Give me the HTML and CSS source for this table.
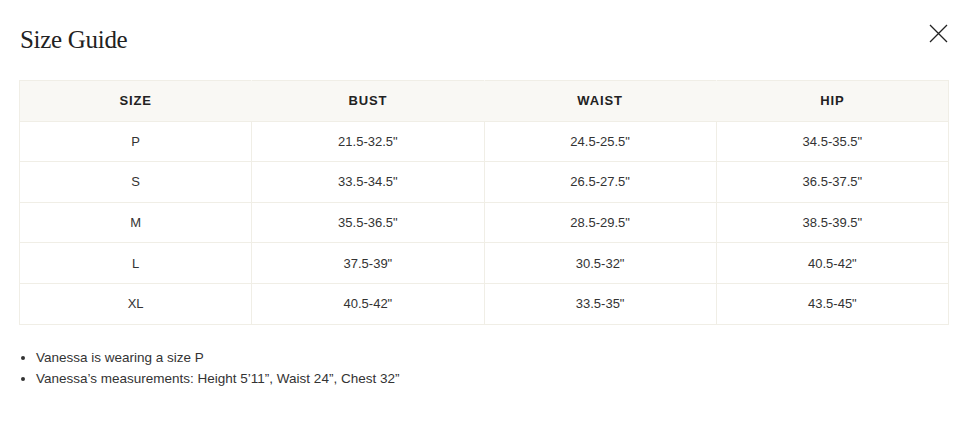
FILE: index.html
```html
<!DOCTYPE html>
<html>
<head>
<meta charset="utf-8">
<link rel="stylesheet" href="styles.css">
</head>
<body>
<div class="modal">
  <div class="head">
    <h1 class="title">Size Guide</h1>
    <button class="close" aria-label="Close">
      <svg width="19" height="19" viewBox="0 0 19 19"><path d="M1 1L18 18M18 1L1 18" stroke="#222" stroke-width="1.3" fill="none"/></svg>
    </button>
  </div>
  <table class="sizes">
    <thead>
      <tr><th>SIZE</th><th>BUST</th><th>WAIST</th><th>HIP</th></tr>
    </thead>
    <tbody>
      <tr><td>P</td><td>21.5-32.5"</td><td>24.5-25.5"</td><td>34.5-35.5"</td></tr>
      <tr><td>S</td><td>33.5-34.5"</td><td>26.5-27.5"</td><td>36.5-37.5"</td></tr>
      <tr><td>M</td><td>35.5-36.5"</td><td>28.5-29.5"</td><td>38.5-39.5"</td></tr>
      <tr><td>L</td><td>37.5-39"</td><td>30.5-32"</td><td>40.5-42"</td></tr>
      <tr><td>XL</td><td>40.5-42"</td><td>33.5-35"</td><td>43.5-45"</td></tr>
    </tbody>
  </table>
  <ul class="notes">
    <li>Vanessa is wearing a size P</li>
    <li>Vanessa’s measurements: Height 5’11”, Waist 24”, Chest 32”</li>
  </ul>
</div>
</body>
</html>
```
FILE: styles.css
```css
html, body { margin: 0; padding: 0; background: #fff; }
body { font-family: "Liberation Sans", Arial, sans-serif; color: #333; }
.modal { padding: 20px 12px 0 19px; }
.head { display: flex; justify-content: space-between; align-items: flex-start; height: 60px; }
.title {
  margin: 6px 0 0 1px;
  font-family: "Liberation Serif", "Times New Roman", serif;
  font-weight: normal;
  font-size: 25px;
  line-height: 28px;
  color: #222;
  letter-spacing: -0.3px;
}
.close { background: none; border: 0; padding: 0; margin: 4px 0 0 0; width: 19px; height: 19px; cursor: pointer; }
.close svg { display: block; }
.sizes {
  width: 930px;
  border-collapse: collapse;
  table-layout: fixed;
  font-size: 13px;
}
.sizes th, .sizes td {
  border: 1px solid #f0eee6;
  height: 39.6px;
  padding: 0;
  text-align: center;
  vertical-align: middle;
}
.sizes th {
  background: #f9f8f4;
  font-weight: bold;
  letter-spacing: 0.9px;
  color: #222;
  border-left-color: #f9f8f4;
  border-right-color: #f9f8f4;
}
.sizes th:first-child { border-left-color: #f0eee6; }
.sizes th:last-child { border-right-color: #f0eee6; }
.sizes td { color: #333; }
.notes {
  margin: 22px 0 0 0;
  padding-left: 17px;
  font-size: 13.5px;
  line-height: 21px;
  color: #333;
}
```
